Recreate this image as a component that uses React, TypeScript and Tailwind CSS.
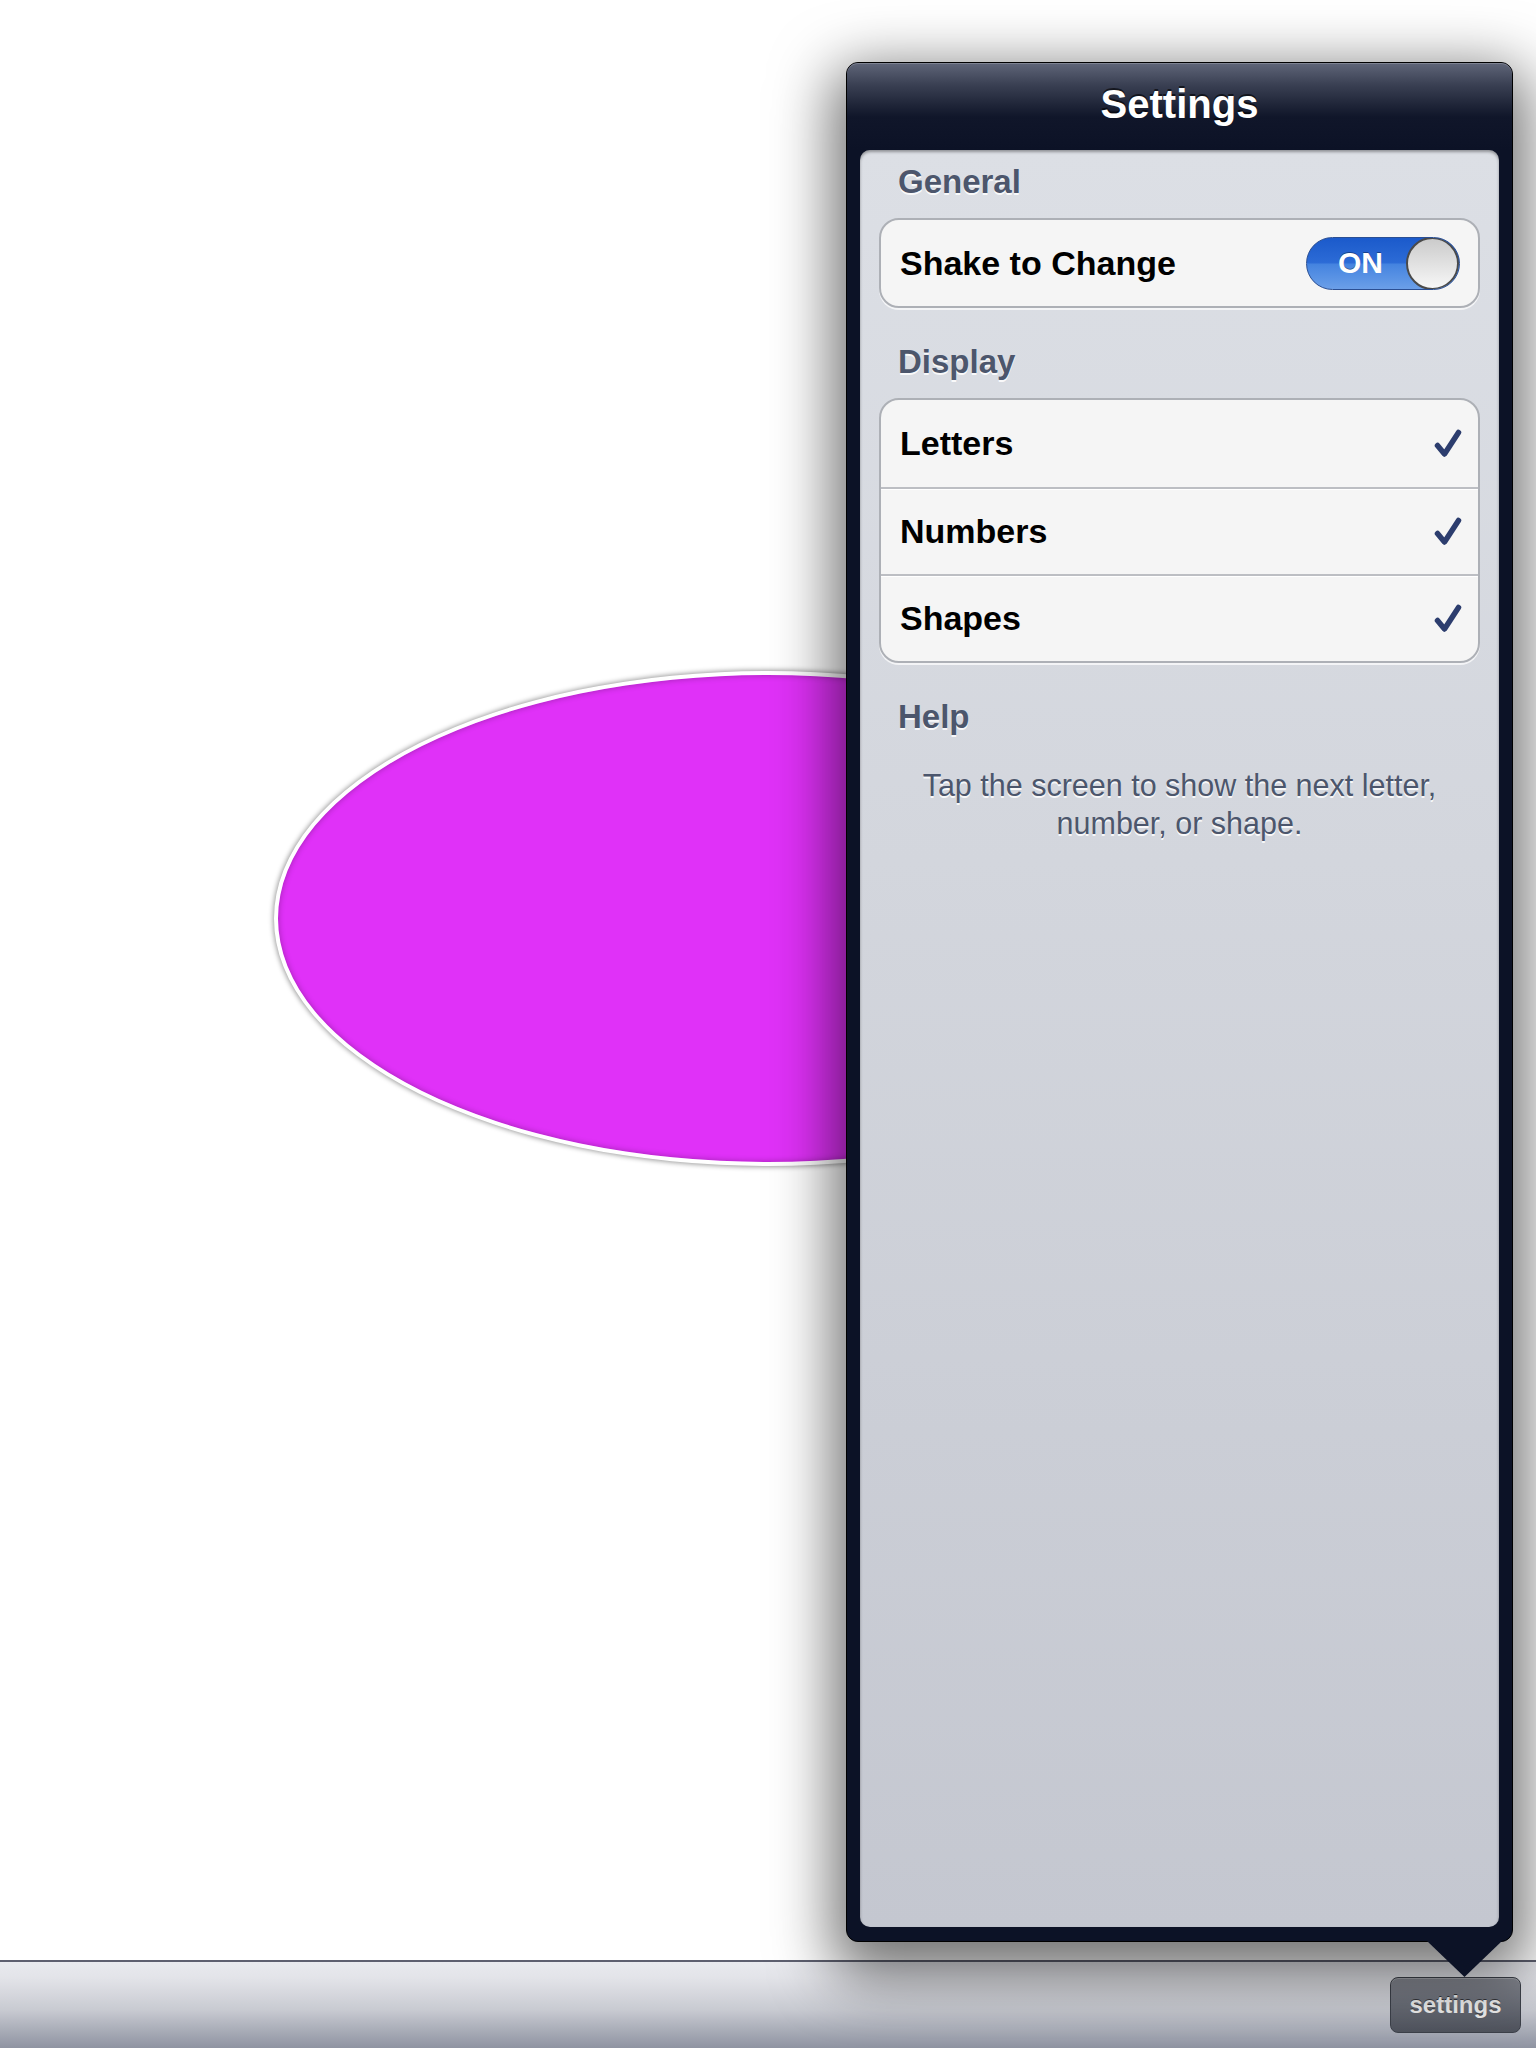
type Option = {
  id: string;
  label: string;
  checked: boolean;
};

const displayOptions: Option[] = [
  { id: "letters", label: "Letters", checked: true },
  { id: "numbers", label: "Numbers", checked: true },
  { id: "shapes", label: "Shapes", checked: true },
];

const labelShadow = "[text-shadow:0_2px_0_rgba(255,255,255,0.85)]";

const CheckMark = () => (
  <svg width="28" height="30" viewBox="0 0 28 30" className="shrink-0">
    <path
      d="M3.5 16.5 L10.5 25 L24.5 3.5"
      fill="none"
      stroke="#2c3d6e"
      strokeWidth="5.5"
      strokeLinecap="round"
      strokeLinejoin="round"
    />
  </svg>
);

const Switch = ({ on }: { on: boolean }) => (
  <div className="flex h-[53px] w-[154px] items-center overflow-hidden rounded-full border border-[#2b4f93] bg-[linear-gradient(to_bottom,#1b5acb_0%,#2c6bd6_48%,#4584e0_52%,#6b9fe8_100%)]">
    <div className="flex w-[108px] justify-center text-[30px] font-bold leading-none text-white [text-shadow:0_-1px_0_rgba(0,0,0,0.35)]">
      {on ? "ON" : "OFF"}
    </div>
    <div className="-ml-[8px] h-[53px] w-[53px] shrink-0 rounded-full border-2 border-[#4a4a4a] bg-gradient-to-b from-[#cbcbcb] to-[#f7f7f7]"></div>
  </div>
);

const SectionLabel = ({ text, first }: { text: string; first?: boolean }) => (
  <div
    className={`${first ? "pt-[14px]" : "pt-[36px]"} pl-[19px] text-[33px] font-bold leading-[36px] text-[#4c566c] ${labelShadow}`}
  >
    {text}
  </div>
);

const App = () => {
  return (
    <div className="relative flex h-[2048px] w-[1536px] flex-col overflow-hidden bg-white font-['Liberation_Sans',Arial,sans-serif]">
      {/* Canvas with the current shape */}
      <main className="relative flex-1">
        <div className="absolute left-[274px] top-[671px] h-[495px] w-[988px] rounded-[50%] border-4 border-white bg-[#e031f8] shadow-[0_0_5px_1px_rgba(0,0,0,0.4),inset_0_0_6px_rgba(0,0,0,0.3)]"></div>
      </main>

      {/* Bottom toolbar */}
      <footer className="flex h-[88px] items-center justify-end border-t-2 border-[#5e6070] bg-[linear-gradient(to_bottom,#e9eaef_0%,#e3e4e9_18%,#c9cbd2_55%,#8e93a1_100%)] pr-[15px]">
        <button className="h-[56px] w-[131px] rounded-[8px] border border-[#3c4049] bg-gradient-to-b from-[#878a93] to-[#4e525c] text-[24px] font-bold text-[#ececec] shadow-[inset_0_1px_0_rgba(255,255,255,0.25)] [text-shadow:0_-1px_0_rgba(0,0,0,0.55)]">
          settings
        </button>
      </footer>

      {/* Settings popover */}
      <div className="absolute left-[846px] top-[62px] flex h-[1880px] w-[667px] flex-col rounded-[12px] border border-black bg-[#0c1226] shadow-[0_20px_60px_14px_rgba(0,0,0,0.55)]">
        <div className="flex h-[87px] items-center justify-center rounded-t-[11px] bg-[linear-gradient(to_bottom,#5f6578_0%,#3a4053_25%,#1d2336_50%,#10162a_62%,#0c1226_100%)] pb-[6px] shadow-[inset_0_1px_0_rgba(255,255,255,0.2)]">
          <h1 className="text-[40px] font-bold leading-none text-white [text-shadow:0_-2px_0_rgba(0,0,0,0.6)]">
            Settings
          </h1>
        </div>

        <div className="mx-[13px] mb-[14px] flex-1 rounded-[10px] bg-[linear-gradient(to_bottom,#dcdfe5_0%,#d3d6dd_40%,#c4c7d0_100%)] px-[19px] shadow-[inset_0_2px_3px_rgba(0,0,0,0.35)]">
          <SectionLabel text="General" first />
          <div className="mt-[18px] flex h-[90px] items-center justify-between rounded-[20px] border-2 border-[#adb0b6] bg-[#f5f5f5] pl-[19px] pr-[18px] shadow-[0_2px_0_rgba(255,255,255,0.7)]">
            <span className="text-[34px] font-bold text-black">
              Shake to Change
            </span>
            <Switch on />
          </div>

          <SectionLabel text="Display" />
          <div className="mt-[18px] overflow-hidden rounded-[20px] border-2 border-[#adb0b6] bg-[#f5f5f5] shadow-[0_2px_0_rgba(255,255,255,0.7)]">
            {displayOptions.map((option, i) => (
              <div
                key={option.id}
                className={`flex h-[87px] items-center justify-between pl-[19px] pr-[16px] ${
                  i > 0
                    ? "border-t-2 border-[#bcbec3] shadow-[inset_0_1px_0_#ffffff]"
                    : ""
                }`}
              >
                <span className="text-[34px] font-bold text-black">
                  {option.label}
                </span>
                {option.checked && <CheckMark />}
              </div>
            ))}
          </div>

          <SectionLabel text="Help" />
          <p
            className={`mt-[31px] text-center text-[30.5px] leading-[38px] text-[#4c566c] ${labelShadow}`}
          >
            Tap the screen to show the next letter,
            <br />
            number, or shape.
          </p>
        </div>

        {/* Arrow pointing at the settings button */}
        <svg
          width="75"
          height="36"
          viewBox="0 0 75 36"
          className="absolute left-[580px] top-[1878px]"
        >
          <path d="M0 0 L75 0 L37.5 36 Z" fill="#0c1226" />
        </svg>
      </div>
    </div>
  );
};

export default App;
